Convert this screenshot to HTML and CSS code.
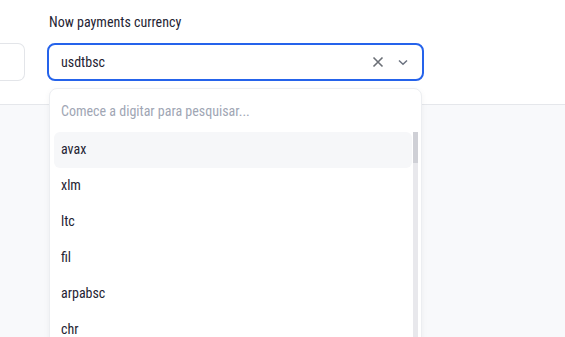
FILE: index.html
```html
<!DOCTYPE html>
<html>
  <head>
    <title>Now payments currency</title>
    <link rel="stylesheet" href="styles.css">
  </head>
  <body>
    <div class="top">
      <div class="field field-prev">
        <div class="prev-box"></div>
      </div>
      <div class="field field-currency">
        <label class="label">Now payments currency</label>
        <div class="select">
          <span class="select-value">usdtbsc</span>
          <span class="select-icons">
            <svg class="icon-clear" width="12" height="12" viewBox="0 0 12 12"><path d="M1.5 1.5 L10.5 10.5 M10.5 1.5 L1.5 10.5" stroke="#6b6f76" stroke-width="1.6" fill="none"/></svg>
            <svg class="icon-caret" width="12" height="12" viewBox="0 0 12 12"><path d="M2 4.5 L6 8.3 L10 4.5" stroke="#6b7280" stroke-width="1.5" fill="none"/></svg>
          </span>
        </div>
        <div class="dropdown">
          <div class="search">Comece a digitar para pesquisar...</div>
          <div class="options">
            <ul class="option-list">
              <li class="option active">avax</li>
              <li class="option">xlm</li>
              <li class="option">ltc</li>
              <li class="option">fil</li>
              <li class="option">arpabsc</li>
              <li class="option">chr</li>
            </ul>
            <div class="scrollbar"><div class="thumb"></div></div>
          </div>
        </div>
      </div>
    </div>
    <div class="bottom"></div>
  </body>
</html>
```

FILE: styles.css
```css
body {
  margin: 0;
  font-family: Roboto, "Liberation Sans", sans-serif;
  font-stretch: 85%;
  background: #f8f9fb;
  height: 337px;
  overflow: hidden;
}
.top {
  background: #fff;
  height: 104px;
  border-bottom: 1px solid #e5e7eb;
  display: flex;
  gap: 22px;
}
.field-prev {
  width: 25px;
  padding-top: 43px;
}
.prev-box {
  height: 36px;
  border: 1px solid #e3e5e9;
  border-left: none;
  border-radius: 0 7px 7px 0;
}
.field-currency {
  width: 377px;
  position: relative;
  padding-top: 14px;
}
.label {
  display: block;
  font-size: 14px;
  color: #1f2433;
  padding-left: 2px;
  height: 29px;
  line-height: 16px;
}
.select {
  height: 34px;
  border: 2px solid #2563eb;
  border-radius: 8px;
  display: flex;
  align-items: center;
  padding: 0 12px;
}
.select-value {
  flex: 1;
  font-size: 14px;
  color: #1f2433;
}
.select-icons {
  display: flex;
  gap: 13px;
  align-items: center;
  padding-right: 1px;
}
.icon-clear, .icon-caret {
  display: block;
}
.dropdown {
  position: absolute;
  top: 88px;
  left: 2px;
  width: 371px;
  height: 260px;
  background: #fff;
  border: 1px solid #eceef1;
  border-radius: 8px;
  box-shadow: 0 2px 6px rgba(0, 0, 0, 0.05);
}
.search {
  font-size: 14px;
  color: #a0a6b4;
  padding: 14px 11px 0;
  height: 29px;
}
.options {
  display: flex;
}
.option-list {
  list-style: none;
  margin: 0 0 0 4px;
  padding: 0;
  flex: 1;
}
.option {
  height: 36px;
  line-height: 35px;
  font-size: 14px;
  color: #1f2433;
  padding-left: 7px;
  border-radius: 6px;
}
.option.active {
  background: #f6f7f9;
}
.scrollbar {
  width: 5px;
  margin: 0 3px 0 1px;
  background: #e8e8ec;
}
.thumb {
  height: 31px;
  background: #cfd0d6;
}
```
